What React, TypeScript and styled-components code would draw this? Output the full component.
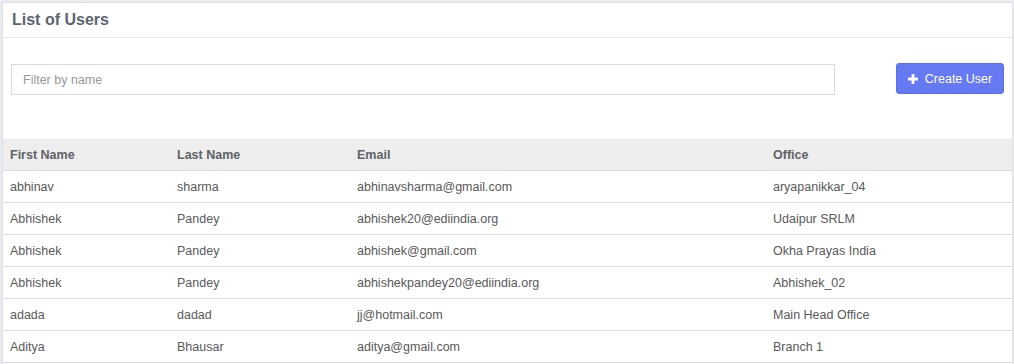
import React from 'react';
import styled, {createGlobalStyle} from 'styled-components';

const GlobalStyle = createGlobalStyle`
	body {
		margin: 0;
		background: #e9ebee;
		font-family: "Liberation Sans", Arial, sans-serif;
	}
`;

interface User {
	firstName: string
	lastName: string
	email: string
	office: string
}

const users: User[] = [
	{firstName: 'abhinav', lastName: 'sharma', email: 'abhinavsharma@gmail.com', office: 'aryapanikkar_04'},
	{firstName: 'Abhishek', lastName: 'Pandey', email: 'abhishek20@ediindia.org', office: 'Udaipur SRLM'},
	{firstName: 'Abhishek', lastName: 'Pandey', email: 'abhishek@gmail.com', office: 'Okha Prayas India'},
	{firstName: 'Abhishek', lastName: 'Pandey', email: 'abhishekpandey20@ediindia.org', office: 'Abhishek_02'},
	{firstName: 'adada', lastName: 'dadad', email: 'jj@hotmail.com', office: 'Main Head Office'},
	{firstName: 'Aditya', lastName: 'Bhausar', email: 'aditya@gmail.com', office: 'Branch 1'},
];

const Page = styled.div`
	padding: 2px 1px 0 2px;
`;

const Card = styled.div`
	background: #fff;
	border: 1px solid #dcdfe3;
	border-bottom: none;
	height: 362px;
	box-sizing: border-box;
	overflow: hidden;
`;

const CardHeader = styled.div`
	height: 34px;
	border-bottom: 1px solid #e3e5e8;
	display: flex;
	align-items: center;
	padding: 0 9px;
`;

const Title = styled.h3`
	margin: 0;
	font-size: 16px;
	font-weight: bold;
	color: #5c6570;
`;

const Toolbar = styled.div`
	display: flex;
	align-items: center;
	justify-content: space-between;
	padding: 26px 8px 0 8px;
	height: 31px;
`;

const FilterInput = styled.input`
	width: 824px;
	height: 31px;
	box-sizing: border-box;
	border: 1px solid #dadada;
	padding: 0 11px;
	font-family: "Liberation Sans", Arial, sans-serif;
	font-size: 12.5px;
	color: #555;
	outline: none;
	&::placeholder {
		color: #999;
	}
`;

const CreateButton = styled.button`
	width: 108px;
	height: 31px;
	margin-top: -2px;
	background: #6479f2;
	border: 1px solid #5b6fe6;
	border-radius: 3px;
	color: #fff;
	font-family: "Liberation Sans", Arial, sans-serif;
	font-size: 12.5px;
	display: flex;
	align-items: center;
	justify-content: center;
	gap: 7px;
	padding: 0;
`;

const Table = styled.table`
	width: 100%;
	margin-top: 44px;
	border-collapse: collapse;
	table-layout: fixed;
	font-size: 12.5px;
`;

const HeadCell = styled.th<{w?: number}>`
	width: ${p => (p.w ? `${p.w}px` : 'auto')};
	background: #eeeeee;
	color: #5f6368;
	font-weight: bold;
	text-align: left;
	height: 31px;
	padding: 0 7px;
	border-bottom: 1px solid #dcdcdc;
`;

const Cell = styled.td`
	height: 31px;
	padding: 0 7px;
	color: #595959;
	border-bottom: 1px solid #dcdcdc;
	white-space: nowrap;
`;

const PlusIcon = () => (
	<svg width="10" height="10" viewBox="0 0 10 10">
		<path d="M3.6 0h2.8v3.6H10v2.8H6.4V10H3.6V6.4H0V3.6h3.6z" fill="#fff"/>
	</svg>
);

export default function App() {
	return (
		<Page>
			<GlobalStyle/>
			<Card>
				<CardHeader>
					<Title>List of Users</Title>
				</CardHeader>
				<Toolbar>
					<FilterInput placeholder="Filter by name"/>
					<CreateButton>
						<PlusIcon/>
						Create User
					</CreateButton>
				</Toolbar>
				<Table>
					<thead>
						<tr>
							<HeadCell w={153}>First Name</HeadCell>
							<HeadCell w={166}>Last Name</HeadCell>
							<HeadCell w={402}>Email</HeadCell>
							<HeadCell>Office</HeadCell>
						</tr>
					</thead>
					<tbody>
						{users.map((u, i) => (
							<tr key={i}>
								<Cell>{u.firstName}</Cell>
								<Cell>{u.lastName}</Cell>
								<Cell>{u.email}</Cell>
								<Cell>{u.office}</Cell>
							</tr>
						))}
					</tbody>
				</Table>
			</Card>
		</Page>
	);
}
